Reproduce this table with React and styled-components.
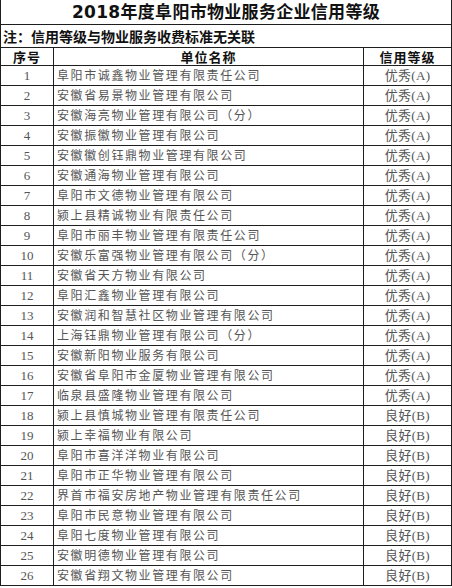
import React from 'react';
import styled, { createGlobalStyle } from 'styled-components';

const GlobalStyle = createGlobalStyle`
  html, body {
    margin: 0;
    padding: 0;
    background: #ffffff;
  }
  body {
    font-family: "Noto Sans CJK SC", sans-serif;
    overflow: hidden;
  }
`;

const Sheet = styled.div`
  width: 452px;
  display: grid;
  grid-template-columns: 53px 310px 88px;
  grid-template-rows: 25px 23px 18px;
  grid-auto-rows: 20px;
  border-left: 1px solid #1e1e1e;
  box-sizing: border-box;
`;

const Cell = styled.div`
  box-sizing: border-box;
  display: flex;
  align-items: center;
  justify-content: ${(p) => (p.$align === 'left' ? 'flex-start' : 'center')};
  border-right: 1px solid #1e1e1e;
  border-bottom: 1px solid #1e1e1e;
  overflow: hidden;
  white-space: nowrap;
  line-height: 1;
`;

const TitleCell = styled(Cell)`
  grid-column: 1 / -1;
  font-size: 17px;
  font-weight: 700;
  letter-spacing: 0.3px;
  color: #111;
  font-family: "DejaVu Sans", "Noto Sans CJK SC", sans-serif;
`;

const NoteCell = styled(Cell)`
  grid-column: 1 / -1;
  justify-content: flex-start;
  padding-left: 2px;
  font-size: 14px;
  font-weight: 700;
  color: #111;
`;

const HeadCell = styled(Cell)`
  font-size: 13px;
  font-weight: 700;
  letter-spacing: 1px;
  color: #111;
`;

const NumCell = styled(Cell)`
  font-family: "Liberation Serif", "Noto Sans CJK SC", serif;
  font-size: 13px;
  color: #555;
`;

const NameCell = styled(Cell)`
  padding-left: 3px;
  font-size: 12px;
  letter-spacing: 1.6px;
  color: #555;
  font-family: "Liberation Serif", "Noto Sans CJK SC", serif;
`;

const GradeCell = styled(Cell)`
  font-family: "Liberation Serif", "Noto Sans CJK SC", serif;
  font-size: 13px;
  letter-spacing: 0.3px;
  color: #555;
`;

const A = '优秀(A)';
const B = '良好(B)';

const companies = [
  ['阜阳市诚鑫物业管理有限责任公司', A],
  ['安徽省易景物业管理有限公司', A],
  ['安徽海亮物业管理有限公司（分）', A],
  ['安徽振徽物业管理有限公司', A],
  ['安徽徽创钰鼎物业管理有限公司', A],
  ['安徽通海物业管理有限公司', A],
  ['阜阳市文德物业管理有限公司', A],
  ['颍上县精诚物业有限责任公司', A],
  ['阜阳市丽丰物业管理有限责任公司', A],
  ['安徽乐富强物业管理有限公司（分）', A],
  ['安徽省天方物业有限公司', A],
  ['阜阳汇鑫物业管理有限公司', A],
  ['安徽润和智慧社区物业管理有限公司', A],
  ['上海钰鼎物业管理有限公司（分）', A],
  ['安徽新阳物业服务有限公司', A],
  ['安徽省阜阳市金厦物业管理有限公司', A],
  ['临泉县盛隆物业管理有限公司', A],
  ['颍上县慎城物业管理有限责任公司', B],
  ['颍上幸福物业有限公司', B],
  ['阜阳市喜洋洋物业有限公司', B],
  ['阜阳市正华物业管理有限公司', B],
  ['界首市福安房地产物业管理有限责任公司', B],
  ['阜阳市民意物业管理有限公司', B],
  ['阜阳七度物业管理有限公司', B],
  ['安徽明德物业管理有限公司', B],
  ['安徽省翔文物业管理有限公司', B],
];

const App = () => (
  <>
    <GlobalStyle />
    <Sheet>
      <TitleCell>2018年度阜阳市物业服务企业信用等级</TitleCell>
      <NoteCell>注：信用等级与物业服务收费标准无关联</NoteCell>
      <HeadCell>序号</HeadCell>
      <HeadCell>单位名称</HeadCell>
      <HeadCell>信用等级</HeadCell>
      {companies.map(([name, grade], i) => (
        <React.Fragment key={name}>
          <NumCell>{i + 1}</NumCell>
          <NameCell $align="left">{name}</NameCell>
          <GradeCell>{grade}</GradeCell>
        </React.Fragment>
      ))}
    </Sheet>
  </>
);

export default App;
